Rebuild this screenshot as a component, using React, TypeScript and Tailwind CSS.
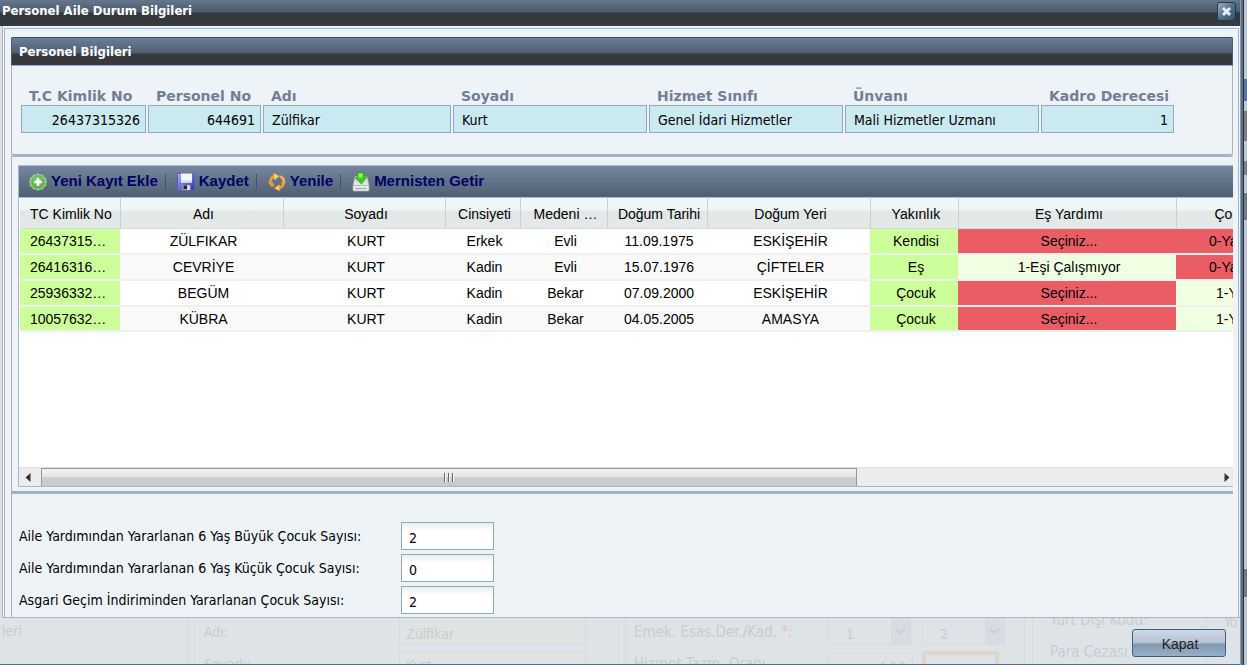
import { useState } from 'react'

const UI = "font-['DejaVu_Sans_Condensed','DejaVu_Sans',sans-serif]"

const FIELDS = [
  { id: 'tc', label: 'T.C Kimlik No', value: '26437315326', box: 'w-[125px]', align: 'text-right' },
  { id: 'pno', label: 'Personel No', value: '644691', box: 'w-[113px]', align: 'text-right' },
  { id: 'adi', label: 'Adı', value: 'Zülfikar', box: 'w-[188px]', align: 'text-left' },
  { id: 'soyadi', label: 'Soyadı', value: 'Kurt', box: 'w-[194px]', align: 'text-left' },
  { id: 'sinif', label: 'Hizmet Sınıfı', value: 'Genel İdari Hizmetler', box: 'w-[194px]', align: 'text-left' },
  { id: 'unvan', label: 'Ünvanı', value: 'Mali Hizmetler Uzmanı', box: 'w-[194px]', align: 'text-left' },
  { id: 'derece', label: 'Kadro Derecesi', value: '1', box: 'w-[133px]', align: 'text-right' },
]

const COLUMNS = [
  { title: 'TC Kimlik No', col: 'w-[100px]' },
  { title: 'Adı', col: 'w-[163px]' },
  { title: 'Soyadı', col: 'w-[162px]' },
  { title: 'Cinsiyeti', col: 'w-[75px]' },
  { title: 'Medeni …', col: 'w-[87px]' },
  { title: 'Doğum Tarihi', col: 'w-[100px]' },
  { title: 'Doğum Yeri', col: 'w-[163px]' },
  { title: 'Yakınlık', col: 'w-[88px]' },
  { title: 'Eş Yardımı', col: 'w-[218px]' },
]

const ROWS = [
  { cells: ['26437315…', 'ZÜLFIKAR', 'KURT', 'Erkek', 'Evli', '11.09.1975', 'ESKİŞEHİR', 'Kendisi'], spouse: 'Seçiniz...', spouseSet: false, child: '0-Ya', childSet: false },
  { cells: ['26416316…', 'CEVRİYE', 'KURT', 'Kadin', 'Evli', '15.07.1976', 'ÇİFTELER', 'Eş'], spouse: '1-Eşi Çalışmıyor', spouseSet: true, child: '0-Ya', childSet: false },
  { cells: ['25936332…', 'BEGÜM', 'KURT', 'Kadin', 'Bekar', '07.09.2000', 'ESKİŞEHİR', 'Çocuk'], spouse: 'Seçiniz...', spouseSet: false, child: '1-Y', childSet: true },
  { cells: ['10057632…', 'KÜBRA', 'KURT', 'Kadin', 'Bekar', '04.05.2005', 'AMASYA', 'Çocuk'], spouse: 'Seçiniz...', spouseSet: false, child: '1-Y', childSet: true },
]

const COUNTS = [
  { id: 'buyuk', label: 'Aile Yardımından Yararlanan 6 Yaş Büyük Çocuk Sayısı:', initial: '2' },
  { id: 'kucuk', label: 'Aile Yardımından Yararlanan 6 Yaş Küçük Çocuk Sayısı:', initial: '0' },
  { id: 'asgari', label: 'Asgari Geçim İndiriminden Yararlanan Çocuk Sayısı:', initial: '2' },
]

function AddIcon() {
  return (
    <svg width="18" height="18" viewBox="0 0 18 18">
      <defs>
        <radialGradient id="add" cx=".5" cy=".4" r=".6">
          <stop offset="0" stopColor="#9bdc80" />
          <stop offset="1" stopColor="#4fa443" />
        </radialGradient>
      </defs>
      <path
        d="M9 .3l2.200 1.300 2.600-.2 1.100 2.300 2.300 1.200-.1 2.600L18 9l-.9 1.500.1 2.600-2.300 1.200-1.100 2.300-2.600-.2L9 17.700l-2.200-1.300-2.600.2-1.100-2.300-2.300-1.200.1-2.600L0 9l.9-1.500-.1-2.600 2.300-1.200 1.100-2.300 2.600.2z"
        fill="#9ccb92"
      />
      <circle cx="9" cy="9" r="6.6" fill="url(#add)" stroke="#74b768" />
      <path d="M9 5.300v7.400M5.300 9h7.400" stroke="#fff" strokeWidth="2.600" />
    </svg>
  )
}

function SaveIcon() {
  return (
    <svg width="18" height="18" viewBox="0 0 18 18">
      <defs>
        <linearGradient id="disk" x1="0" y1="0" x2="1" y2="1">
          <stop offset="0" stopColor="#a9b2f4" />
          <stop offset=".5" stopColor="#6a70d2" />
          <stop offset="1" stopColor="#303390" />
        </linearGradient>
      </defs>
      <path d="M.5.5h17v17H2L.5 16z" fill="url(#disk)" stroke="#5a60bd" />
      <path d="M4 .5h11v9H4z" fill="#f4f7ff" />
      <path d="M4 7h11v2.500H4z" fill="#dbe2f5" />
      <path d="M5 12h8.500v5H5z" fill="#a4a8b4" />
      <path d="M6.500 12.500h3.500V16H6.500z" fill="#23252e" />
      <path d="M10.500 12.500h2V17h-2z" fill="#eceef2" />
    </svg>
  )
}

function RefreshIcon() {
  return (
    <svg width="18" height="18" viewBox="0 0 18 18" fill="none">
      <path d="M2.500 10.500C1.600 6.500 3.500 4 7 3.300" stroke="#eda23c" strokeWidth="2.600" />
      <path d="M5.500 0l6 3.200-5.300 4z" fill="#f9d55a" stroke="#dd9230" strokeWidth=".6" />
      <path d="M12 3.500c3 1 4.300 3.500 3.700 6.700" stroke="#f2b24c" strokeWidth="2.600" />
      <path d="M12.500 9.500l5.200.3-2.200 4z" fill="#e99a30" />
      <path d="M15 12c-1 2-2.700 3-5 3.100" stroke="#eda23c" strokeWidth="2.600" />
      <path d="M11.500 11.500V18l-5.200-2.800z" fill="#f9d55a" stroke="#dd9230" strokeWidth=".6" />
      <path d="M0 9.500l4.500-.8 2.300 4.300-3.300 1z" fill="#e99a30" />
    </svg>
  )
}

function ImportIcon() {
  return (
    <svg width="18" height="20" viewBox="0 0 18 20">
      <path d="M3 4.500h12l2 9H1z" fill="#dfe3e6" stroke="#a7b0b6" strokeWidth=".6" />
      <path d="M1 13.500h16V18a1 1 0 0 1-1 1H2a1 1 0 0 1-1-1z" fill="#eef0f2" stroke="#aab2b8" strokeWidth=".8" />
      <path d="M3 16.500h12" stroke="#a9b1b7" strokeWidth="1.500" />
      <path d="M5.500.5h6.500v4.500h3L9.500 12 3 6l2.500-.5z" fill="#3fcf22" stroke="#2c9c1c" strokeWidth=".7" />
      <path d="M6.500 1.500h4v4h-4z" fill="#8cf06c" />
    </svg>
  )
}

const ACTIONS = [
  { label: 'Yeni Kayıt Ekle', Icon: AddIcon },
  { label: 'Kaydet', Icon: SaveIcon },
  { label: 'Yenile', Icon: RefreshIcon },
  { label: 'Mernisten Getir', Icon: ImportIcon },
]

function TitleBar() {
  return (
    <header className="flex h-[26px] items-start justify-between bg-[linear-gradient(#65778c_0px,#4b5a6b_12px,#33363b_13px,#383c41_26px)] pl-[2px] pr-1">
      <h1 className="text-[13px] leading-[22px] font-bold text-white">Personel Aile Durum Bilgileri</h1>
      <button aria-label="Kapat" className="mt-[2px] flex h-[19px] w-[19px] items-center justify-center rounded-[3px] border border-[#1c3a56] bg-linear-to-br from-[#a3b3bf] via-[#54708a] to-[#35536f]">
        <svg width="11" height="11" viewBox="0 0 11 11">
          <path d="M2 2l7 7M9 2L2 9" stroke="#e8edf1" strokeWidth="3" />
        </svg>
      </button>
    </header>
  )
}

function PersonPanel() {
  return (
    <section className="rounded-b-[3px] border-x border-b-2 border-[#aab2b8]">
      <h2 className="-mx-px h-[29px] rounded-t-[2px] border-x border-t border-b border-x-[#4b5d72] border-t-[#3d4a5b] border-b-[#8fb0e0] bg-[linear-gradient(#6b7f9a_0px,#4f5e70_15px,#37393e_16px)] pl-[7px] text-[13px] leading-[28px] font-bold text-white">
        Personel Bilgileri
      </h2>
      <div className="flex gap-[2px] px-[9px] pt-[21px] pb-[21px]">
        {FIELDS.map(f => (
          <div key={f.id} className={`${f.box} flex flex-col`}>
            <label htmlFor={f.id} className="pl-2 font-['DejaVu_Sans',sans-serif] text-[14px] leading-[18px] font-bold whitespace-nowrap text-[#718096]">
              {f.label}
            </label>
            <input
              id={f.id}
              readOnly
              value={f.value}
              className={`h-[28px] w-full border border-[#93a8ba] bg-[#cbe9f1] pt-[2px] pr-[5px] pl-2 text-[14px] text-black ${f.align}`}
            />
          </div>
        ))}
      </div>
    </section>
  )
}

function Toolbar() {
  return (
    <div className="flex h-[33px] items-center border-y border-[#a8bdd4] bg-linear-to-b from-[#75879f] to-[#4f5f72] pl-[10px]">
      {ACTIONS.map(({ label, Icon }, i) => (
        <div key={label} className="flex items-center">
          {i > 0 && <span className="mr-[11px] ml-[7px] h-4 w-px bg-[#41526a]" />}
          <button className="flex items-center gap-1 text-[15px] font-bold whitespace-nowrap text-[#000066]">
            <Icon />
            {label}
          </button>
        </div>
      ))}
    </div>
  )
}

function FamilyTable() {
  const head = 'overflow-hidden border-r border-b border-r-[#cfcfcf] border-b-[#d5dbdb] pt-[2px] font-normal whitespace-nowrap'
  return (
    <table className="w-full table-fixed border-collapse text-center text-[14px] leading-[22px] text-black">
      <colgroup>
        {COLUMNS.map(c => <col key={c.title} className={c.col} />)}
        <col />
      </colgroup>
      <thead>
        <tr className="h-[30px] bg-[linear-gradient(#f3f6f8_0px,#f1f4f5_12px,#e1e8e7_13px,#e3e9e8_30px)]">
          {COLUMNS.map((c, i) => (
            <th key={c.title} className={`${head} ${i === 0 ? 'pl-[10px] text-left' : 'pl-1'}`}>{c.title}</th>
          ))}
          <th className="overflow-hidden border-b border-b-[#d5dbdb] pt-[2px] pl-[38px] text-left font-normal whitespace-nowrap">Ço</th>
        </tr>
      </thead>
      <tbody>
        {ROWS.map(r => (
          <tr key={r.cells[0]} className="h-[26px] border-b-2 border-[#efefef] last:h-[25px] even:bg-[#fafafa]">
            {r.cells.map((text, i) => (
              <td
                key={i}
                className={[
                  'overflow-hidden whitespace-nowrap',
                  i === 0 ? 'pl-[10px] text-left' : 'pl-1',
                  i === 0 || i === 7 ? 'bg-[#ccff99]' : '',
                ].join(' ')}
              >
                {text}
              </td>
            ))}
            <td className={`pl-1 ${r.spouseSet ? 'bg-[#f0ffe1]' : 'bg-[#eb5d65]'}`}>{r.spouse}</td>
            <td className={`overflow-hidden text-left whitespace-nowrap ${r.childSet ? 'bg-[#f0ffe1] pl-[40px]' : 'bg-[#eb5d65] pl-[33px]'}`}>
              {r.child}
            </td>
          </tr>
        ))}
      </tbody>
    </table>
  )
}

function ScrollBar() {
  return (
    <div className="flex h-[19px] items-stretch border-t border-[#dfdfdf] bg-[#ececec]">
      <button aria-label="Sola kaydır" className="flex w-[22px] items-center pl-[6px]">
        <svg width="6" height="9" viewBox="0 0 6 9"><path d="M5.500 0v9L.5 4.500z" fill="#333" /></svg>
      </button>
      <div className="flex flex-1">
        <div className="flex w-[69%] items-center justify-center gap-[2px] border border-b-0 border-[#979797] bg-[linear-gradient(#f3f3f3,#e4e4e4_45%,#cfcfcf_50%,#c8c8c8)]">
          <span className="h-[9px] w-[2px] border-r border-white bg-[#666]" />
          <span className="h-[9px] w-[2px] border-r border-white bg-[#666]" />
          <span className="h-[9px] w-[2px] border-r border-white bg-[#666]" />
        </div>
      </div>
      <button aria-label="Sağa kaydır" className="flex w-[9px] items-center">
        <svg width="6" height="9" viewBox="0 0 6 9"><path d="M.5 0v9l5-4.500z" fill="#333" /></svg>
      </button>
    </div>
  )
}

function CountField({ id, label, initial }: { id: string; label: string; initial: string }) {
  const [value, setValue] = useState(initial)
  return (
    <div className="flex items-center">
      <label htmlFor={id} className="w-[382px] text-[14px] leading-[20px] whitespace-nowrap text-black">{label}</label>
      <input
        id={id}
        value={value}
        onChange={e => setValue(e.target.value)}
        className="h-[28px] w-[93px] border border-[#93a8ba] bg-[linear-gradient(#e9edee_0px,#ffffff_8px)] pt-1 pl-[7px] text-[14px] text-black"
      />
    </div>
  )
}

function Chevron() {
  return (
    <svg width="11" height="6" viewBox="0 0 11 6" fill="none">
      <path d="M1 1l4.500 4L10 1" stroke="#c9d0d5" strokeWidth="2" />
    </svg>
  )
}

// Faded form of the page under the dialog, seen through the footer
function GhostForm() {
  const line = 'border-[#d5dadd]'
  return (
    <div aria-hidden="true" className="absolute inset-0 flex overflow-hidden text-[14px] leading-[32px] whitespace-nowrap text-[#c8ccd0] select-none">
      <div className={`w-[189px] shrink-0 border-r ${line} pl-[2px] leading-[26px]`}>leri</div>
      <div className={`ml-[5px] flex w-[425px] shrink-0 border-x ${line} pl-[9px]`}>
        <div className="w-[195px]">
          <p className="leading-[28px]">Adı:</p>
          <p className="leading-[36px]">Soyadı:</p>
        </div>
        <div className="w-[187px]">
          <p className={`mb-[6px] h-[27px] border border-t-0 ${line} bg-[#dfe3e3] pl-[6px]`}>Zülfikar</p>
          <p className={`h-[27px] border ${line} bg-[#dfe3e3] pl-[6px] leading-[26px]`}>Kurt</p>
        </div>
      </div>
      <div className={`ml-[6px] flex w-[400px] shrink-0 border-x ${line} pl-[8px]`}>
        <div className="w-[194px] text-[15px]">
          <p className="leading-[28px]">Emek. Esas.Der./Kad. <span className="text-[#e3c5c8]">*</span>:</p>
          <p className="leading-[36px]">Hizmet Tazm. Oranı</p>
        </div>
        <div className="w-[94px]">
          <div className={`mb-[8px] flex h-[27px] w-[83px] justify-between border border-t-0 ${line} pl-[17px]`}>
            1
            <span className="flex w-[19px] items-center justify-center bg-[#d7dce0]"><Chevron /></span>
          </div>
          <p className={`h-[27px] w-[85px] border ${line} bg-[#dfe3e3] pr-[6px] text-right leading-[26px]`}>4,10</p>
        </div>
        <div>
          <div className={`mb-[6px] flex h-[27px] w-[83px] justify-between border border-t-0 ${line} pl-[17px]`}>
            2
            <span className="flex w-[19px] items-center justify-center bg-[#d7dce0]"><Chevron /></span>
          </div>
          <p className="h-[30px] w-[77px] rounded-[2px] border-4 border-[#e2d6cb]" />
        </div>
      </div>
      <div className={`ml-[7px] flex flex-1 border-l ${line} pl-[17px]`}>
        <div className="w-[156px] text-[15px]">
          <p className="leading-[4px]">Yurt Dışı Kodu:</p>
          <p className="leading-[60px]">Para Cezası T</p>
        </div>
        <div className={`flex-1 border-l ${line} pl-[17px] leading-[8px]`}>Yö</div>
      </div>
    </div>
  )
}

export default function App() {
  return (
    <div className={`flex min-h-screen overflow-hidden bg-[#c9ced4] ${UI}`}>
      <div className="flex min-w-0 flex-1 flex-col border-b border-[#5b6b80] bg-[#dde3e6]">
        <TitleBar />
        <main className="ml-[2px] flex flex-1 flex-col border-b border-l border-[#aeb6bc] bg-[#eef3f8]">
          <div className="mt-[2px] mr-px ml-[1px] flex flex-1 flex-col border-t border-r border-l border-t-[#95b8e7] border-r-[#9fb6d0] border-l-[#aeb6bc] pt-2 pr-[5px] pl-[6px]">
            <PersonPanel />
            <section className="flex flex-1 flex-col border-t border-b-2 border-l border-t-[#95b8e7] border-b-[#a6aeb4] border-l-[#aab2b8] pt-[8px] pb-[4px] pl-[6px] font-['Liberation_Sans',Arial,sans-serif]">
              <div className="flex flex-1 flex-col border-b border-l border-[#a2b8cc] bg-white">
                <Toolbar />
                <div className="pl-px">
                  <FamilyTable />
                </div>
                <div className="flex-1" />
                <ScrollBar />
              </div>
            </section>
            <section className="flex flex-col gap-[4px] border-t border-l border-t-[#95b8e7] border-l-[#aab2b8] pt-[28px] pb-[3px] pl-[7px]">
              {COUNTS.map(c => <CountField key={c.id} {...c} />)}
            </section>
          </div>
        </main>
        <footer className="relative flex h-[46px] items-start justify-end pt-[11px] pr-[14px]">
          <GhostForm />
          <button className="relative h-[28px] w-[94px] rounded-[3px] border border-[#3f5f80] bg-[linear-gradient(#cfd9e4,#b4c3d3_48%,#8298b2_54%,#98aec6)] pt-[2px] pl-[2px] font-['Liberation_Sans',Arial,sans-serif] text-[14px] text-[#222]">
            Kapat
          </button>
        </footer>
      </div>
      {/* dialog edge and the page behind it */}
      <div className="flex w-[7px]">
        <div className="w-px bg-[#8b9aab]" />
        <div className="w-[2px] bg-[#5a6d85]" />
        <div className="w-px bg-[#22344f]" />
        <div className="flex flex-1 flex-col bg-[#c3c8ce]">
          <div className="h-[79px]" />
          <div className="h-[22px] bg-[#5d74a0]" />
          <div className="h-[10px]" />
          <div className="h-[30px] bg-[#7f7f82]" />
          <div className="h-[20px]" />
          <div className="h-[14px] bg-[#7d8085]" />
          <div className="h-[18px]" />
          <div className="h-[27px] bg-[#757a82]" />
          <div className="flex-1" />
          <div className="h-[28px] bg-[#757a82]" />
          <div className="h-[68px]" />
        </div>
      </div>
    </div>
  )
}
